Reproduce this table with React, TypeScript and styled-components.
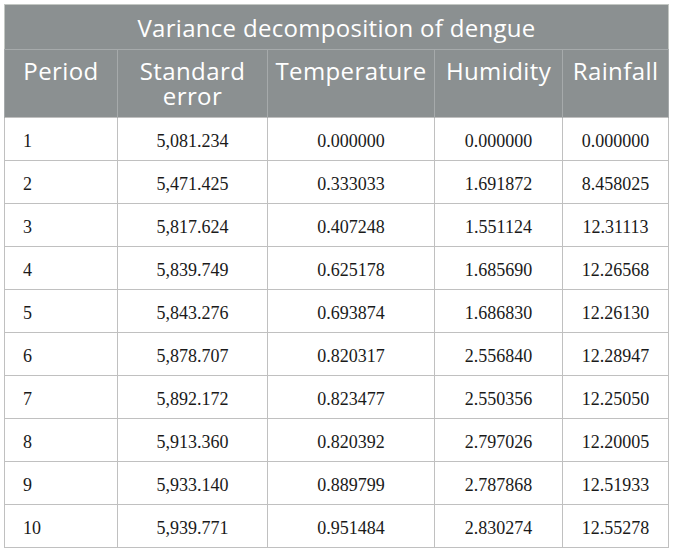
import styled, { createGlobalStyle } from "styled-components";

const GlobalStyle = createGlobalStyle`
  body {
    margin: 0;
    background: #ffffff;
  }
`;

const rows: string[][] = [
  ["1", "5,081.234", "0.000000", "0.000000", "0.000000"],
  ["2", "5,471.425", "0.333033", "1.691872", "8.458025"],
  ["3", "5,817.624", "0.407248", "1.551124", "12.31113"],
  ["4", "5,839.749", "0.625178", "1.685690", "12.26568"],
  ["5", "5,843.276", "0.693874", "1.686830", "12.26130"],
  ["6", "5,878.707", "0.820317", "2.556840", "12.28947"],
  ["7", "5,892.172", "0.823477", "2.550356", "12.25050"],
  ["8", "5,913.360", "0.820392", "2.797026", "12.20005"],
  ["9", "5,933.140", "0.889799", "2.787868", "12.51933"],
  ["10", "5,939.771", "0.951484", "2.830274", "12.55278"],
];

const colWidths = [113, 150, 167, 128, 106];

export default function App() {
  return (
    <>
      <GlobalStyle />
      <Page>
        <Table>
          <colgroup>
            {colWidths.map((w, i) => (
              <col key={i} style={{ width: w }} />
            ))}
          </colgroup>
          <thead>
            <tr>
              <TitleCell colSpan={5}>Variance decomposition of dengue</TitleCell>
            </tr>
            <tr>
              <HeadCell>Period</HeadCell>
              <HeadCell>Standard<br />error</HeadCell>
              <HeadCell>Temperature</HeadCell>
              <HeadCell>Humidity</HeadCell>
              <HeadCell>Rainfall</HeadCell>
            </tr>
          </thead>
          <tbody>
            {rows.map((r) => (
              <tr key={r[0]}>
                {r.map((v, i) => (
                  <Cell key={i} $left={i === 0}>{v}</Cell>
                ))}
              </tr>
            ))}
          </tbody>
        </Table>
      </Page>
    </>
  );
}

const Page = styled.div`
  padding: 4px 5px 0 4px;
`;

const Table = styled.table`
  border-collapse: collapse;
  table-layout: fixed;
  width: 664px;
  border: 1px solid #c3c7c3;
`;

const TitleCell = styled.th`
  height: 45px;
  padding: 0;
  background: #8b9091;
  color: #ffffff;
  font-family: "Open Sans", "Lato", sans-serif;
  font-weight: 400;
  font-size: 24px;
  letter-spacing: 0.3px;
  text-align: center;
  vertical-align: middle;
  border-bottom: 1px solid #a6aaab;
  box-sizing: border-box;
`;

const HeadCell = styled.th`
  height: 68px;
  padding: 8px 0 0;
  background: #8b9091;
  color: #ffffff;
  font-family: "Open Sans", "Lato", sans-serif;
  font-weight: 400;
  font-size: 24px;
  letter-spacing: 0.4px;
  line-height: 25px;
  text-align: center;
  vertical-align: top;
  border-left: 1px solid #a6aaab;
  border-right: 1px solid #a6aaab;
  box-sizing: border-box;
  white-space: nowrap;
`;

const Cell = styled.td<{ $left?: boolean }>`
  height: 43px;
  padding: 4px 0 0 ${(p) => (p.$left ? "18px" : "0")};
  font-family: "Liberation Serif", "Times New Roman", serif;
  font-size: 18px;
  color: #1a1a1a;
  text-align: ${(p) => (p.$left ? "left" : "center")};
  vertical-align: middle;
  border: 1px solid #c0c0c0;
  box-sizing: border-box;
`;
